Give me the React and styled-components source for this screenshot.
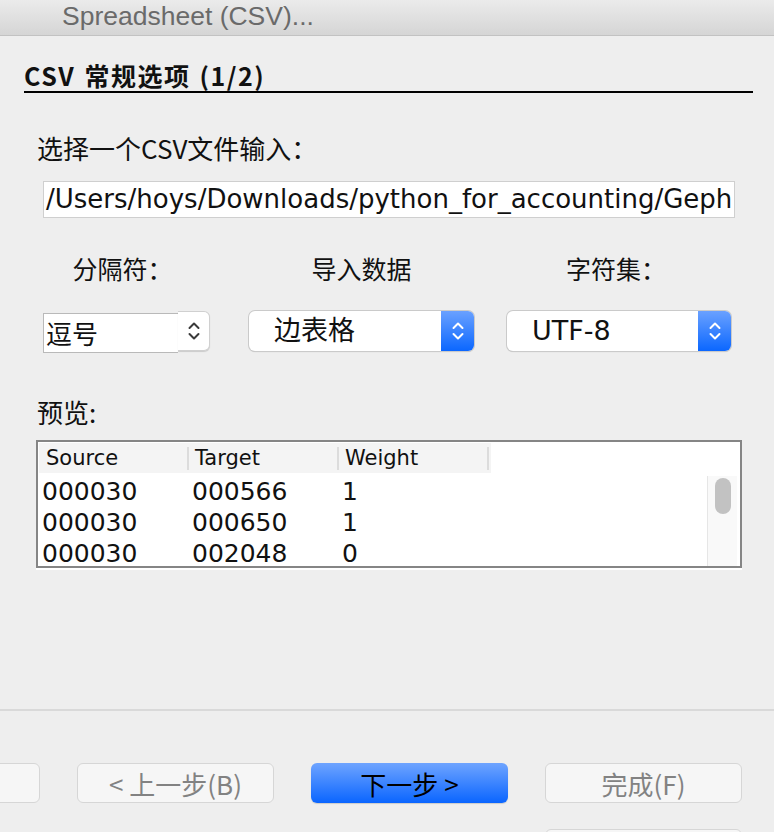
import styled, { createGlobalStyle } from 'styled-components';

const GlobalStyle = createGlobalStyle`
    html, body {
        margin: 0;
        padding: 0;
        background: #eeeeee;
    }
    body {
        font-family: "DejaVu Sans", "Noto Sans CJK SC", sans-serif;
        color: #111;
    }
`;

const rows = [
    ['000030', '000566', '1'],
    ['000030', '000650', '1'],
    ['000030', '002048', '0'],
];

const Chevrons = ({ color }) => (
    <svg width="14" height="22" viewBox="0 0 14 22">
        <path d="M2.5 8 L7 3.5 L11.5 8" fill="none" stroke={color} strokeWidth="2" strokeLinecap="round" strokeLinejoin="round" />
        <path d="M2.5 14 L7 18.5 L11.5 14" fill="none" stroke={color} strokeWidth="2" strokeLinecap="round" strokeLinejoin="round" />
    </svg>
);

const App = () => {
    return (
        <>
            <GlobalStyle />
            <Window>
                <TitleBar>Spreadsheet (CSV)...</TitleBar>

                <Main>
                    <Heading>CSV 常规选项 (1/2)</Heading>

                    <FieldLabel>选择一个CSV文件输入：</FieldLabel>
                    <PathField>/Users/hoys/Downloads/python_for_accounting/Gephi/edges.csv</PathField>

                    <OptionsGrid>
                        <OptionLabel width={167} shift={4}>分隔符：</OptionLabel>
                        <OptionLabel width={225}>导入数据</OptionLabel>
                        <OptionLabel width={224} shift={3}>字符集：</OptionLabel>

                        <EditableCombo>
                            <ComboText>逗号</ComboText>
                            <StepperBox>
                                <Chevrons color="#3a3a3a" />
                            </StepperBox>
                        </EditableCombo>

                        <PopupCombo width={225}>
                            <PopupText>边表格</PopupText>
                            <BlueStepper>
                                <Chevrons color="#fff" />
                            </BlueStepper>
                        </PopupCombo>

                        <PopupCombo width={224}>
                            <PopupText>UTF-8</PopupText>
                            <BlueStepper>
                                <Chevrons color="#fff" />
                            </BlueStepper>
                        </PopupCombo>
                    </OptionsGrid>

                    <FieldLabel top={44}>预览:</FieldLabel>

                    <PreviewTable>
                        <HeaderRow>
                            <HeaderCell>Source</HeaderCell>
                            <HeaderCell>Target</HeaderCell>
                            <HeaderCell>Weight</HeaderCell>
                        </HeaderRow>
                        <TableBody>
                            <Rows>
                                {rows.map((row, idx) => (
                                    <DataRow key={idx}>
                                        {row.map((cell, i) => (
                                            <DataCell key={i}>{cell}</DataCell>
                                        ))}
                                    </DataRow>
                                ))}
                            </Rows>
                            <ScrollTrack>
                                <ScrollThumb />
                            </ScrollTrack>
                        </TableBody>
                    </PreviewTable>
                </Main>

                <Footer>
                    <ButtonRow>
                        <WizardButton disabled>取消</WizardButton>
                        <WizardButton disabled>&lt; 上一步(B)</WizardButton>
                        <WizardButton primary>下一步 &gt;</WizardButton>
                        <WizardButton disabled>完成(F)</WizardButton>
                    </ButtonRow>
                    <ButtonRow>
                        <WizardButton disabled>帮助</WizardButton>
                    </ButtonRow>
                </Footer>
            </Window>
        </>
    );
};

const Window = styled.div`
    width: 774px;
    height: 832px;
    overflow: hidden;
    display: flex;
    flex-flow: column;
    background: #eeeeee;
`;

const TitleBar = styled.div`
    flex: none;
    height: 35px;
    line-height: 33px;
    padding-left: 62px;
    border-bottom: 1px solid #c2c2c2;
    background: linear-gradient(#ebebeb, #d5d5d5);
    font-family: "Liberation Sans", "Noto Sans", sans-serif;
    font-size: 26.5px;
    color: #6a6a6a;
`;

const Main = styled.div`
    flex: 1;
    display: flex;
    flex-flow: column;
    padding: 0 21px 0 24px;
`;

const Heading = styled.div`
    margin-top: 24px;
    line-height: 30px;
    padding-bottom: 1px;
    border-bottom: 2px solid #000;
    font-family: "Noto Sans CJK SC", sans-serif;
    font-size: 25px;
    font-weight: 700;
    letter-spacing: 1.5px;
    word-spacing: 2px;
`;

const FieldLabel = styled.div`
    margin-top: ${(props) => props.top || 40}px;
    margin-left: 13px;
    line-height: 30px;
    font-size: 26px;
    font-family: "Noto Sans CJK SC", sans-serif;
`;

const PathField = styled.div`
    margin: 18px 18px 0 19px;
    height: 35px;
    line-height: 35px;
    padding-left: 2px;
    background: #fff;
    border: 1px solid #cfcfcf;
    font-size: 26px;
    white-space: nowrap;
    overflow: hidden;
`;

const OptionsGrid = styled.div`
    margin: 35px 0 0 19px;
    display: grid;
    grid-template-columns: 206px 258px 224px;
    row-gap: 28px;
    align-items: start;
    justify-items: start;
`;

const OptionLabel = styled.div`
    width: ${(props) => props.width}px;
    box-sizing: border-box;
    padding-right: ${(props) => (props.shift || 0) * 2}px;
    line-height: 30px;
    text-align: center;
    font-family: "Noto Sans CJK SC", sans-serif;
    font-size: 25px;
`;

const EditableCombo = styled.div`
    display: flex;
    align-items: flex-start;
    height: 42px;
`;

const ComboText = styled.div`
    width: 132px;
    margin-top: 2px;
    height: 38px;
    line-height: 38px;
    padding-left: 2px;
    background: #fff;
    border: 1px solid #b9b9b9;
    border-right: none;
    font-family: "Noto Sans CJK SC", sans-serif;
    font-size: 26px;
`;

const StepperBox = styled.div`
    width: 31px;
    height: 38px;
    display: flex;
    align-items: center;
    justify-content: center;
    background: #fff;
    border: 1px solid #d0d0d0;
    border-left: none;
    border-radius: 0 6px 6px 0;
    box-shadow: 0 1px 1px rgba(0, 0, 0, 0.15);
`;

const PopupCombo = styled.div`
    display: flex;
    width: ${(props) => props.width}px;
    height: 40px;
    background: #fff;
    border-radius: 6px;
    box-shadow: 0 0 0 1px #cacaca, 0 1px 1px rgba(0, 0, 0, 0.2);
    overflow: hidden;
`;

const PopupText = styled.div`
    flex: 1;
    padding-left: 25px;
    line-height: 40px;
    font-size: 27px;
    font-family: "DejaVu Sans", "Noto Sans CJK SC", sans-serif;
`;

const BlueStepper = styled.div`
    width: 33px;
    display: flex;
    align-items: center;
    justify-content: center;
    background: linear-gradient(#6aa1ff, #0b67ff);
`;

const PreviewTable = styled.div`
    margin: 13px 11px 0 12px;
    height: 124px;
    border: 2px solid #858585;
    background: #fff;
    box-shadow: 0 2px 0 #fff;
    display: flex;
    flex-flow: column;
    overflow: hidden;
`;

const HeaderRow = styled.div`
    display: flex;
    width: 452px;
    height: 30px;
    margin: 1px 0 0 1px;
    background: #f4f4f4;
`;

const HeaderCell = styled.div`
    padding-left: 6px;
    margin-top: 4px;
    height: 23px;
    line-height: 23px;
    border-right: 2px solid #dcdcdc;
    font-size: 21px;
    box-sizing: content-box;

    &:first-child {
        padding-left: 7px;
        width: 141px;
    }
    &:not(:first-child) {
        width: 142px;
    }
`;

const TableBody = styled.div`
    flex: 1;
    display: flex;
    margin-top: 3px;
    min-height: 0;
`;

const Rows = styled.div`
    flex: 1;
`;

const DataRow = styled.div`
    display: grid;
    grid-template-columns: 150px 150px 150px;
    height: 31px;
    line-height: 31px;
    padding-left: 4px;
`;

const DataCell = styled.div`
    font-size: 25px;
    font-family: "DejaVu Sans", sans-serif;
`;

const ScrollTrack = styled.div`
    width: 29px;
    margin-right: 3px;
    background: #f9f9f9;
    border-left: 1px solid #e6e6e6;
    display: flex;
    justify-content: center;
    padding-top: 2px;
`;

const ScrollThumb = styled.div`
    width: 16px;
    height: 36px;
    border-radius: 8px;
    background: #c2c2c2;
`;

const Footer = styled.div`
    flex: none;
    height: 123px;
    border-top: 2px solid #d9d9d9;
    padding-top: 52px;
    box-sizing: border-box;
    display: flex;
    flex-flow: column;
    gap: 26px;
`;

const ButtonRow = styled.div`
    display: flex;
    justify-content: flex-end;
    gap: 37px;
    padding-right: 32px;
`;

const WizardButton = styled.div`
    flex: none;
    width: 197px;
    height: 40px;
    box-sizing: border-box;
    border-radius: 6px;
    display: flex;
    align-items: center;
    justify-content: center;
    font-family: "Noto Sans CJK SC", sans-serif;
    font-size: 26px;
    color: ${(props) => (props.primary ? '#000' : '#828282')};
    background: ${(props) => (props.primary ? 'linear-gradient(#6ea4ff, #0a65ff)' : '#f6f6f6')};
    border: ${(props) => (props.primary ? 'none' : '1px solid #d6d6d6')};
    box-shadow: ${(props) => (props.primary ? '0 1px 1px rgba(0,0,0,0.15)' : 'none')};
`;

export default App;
